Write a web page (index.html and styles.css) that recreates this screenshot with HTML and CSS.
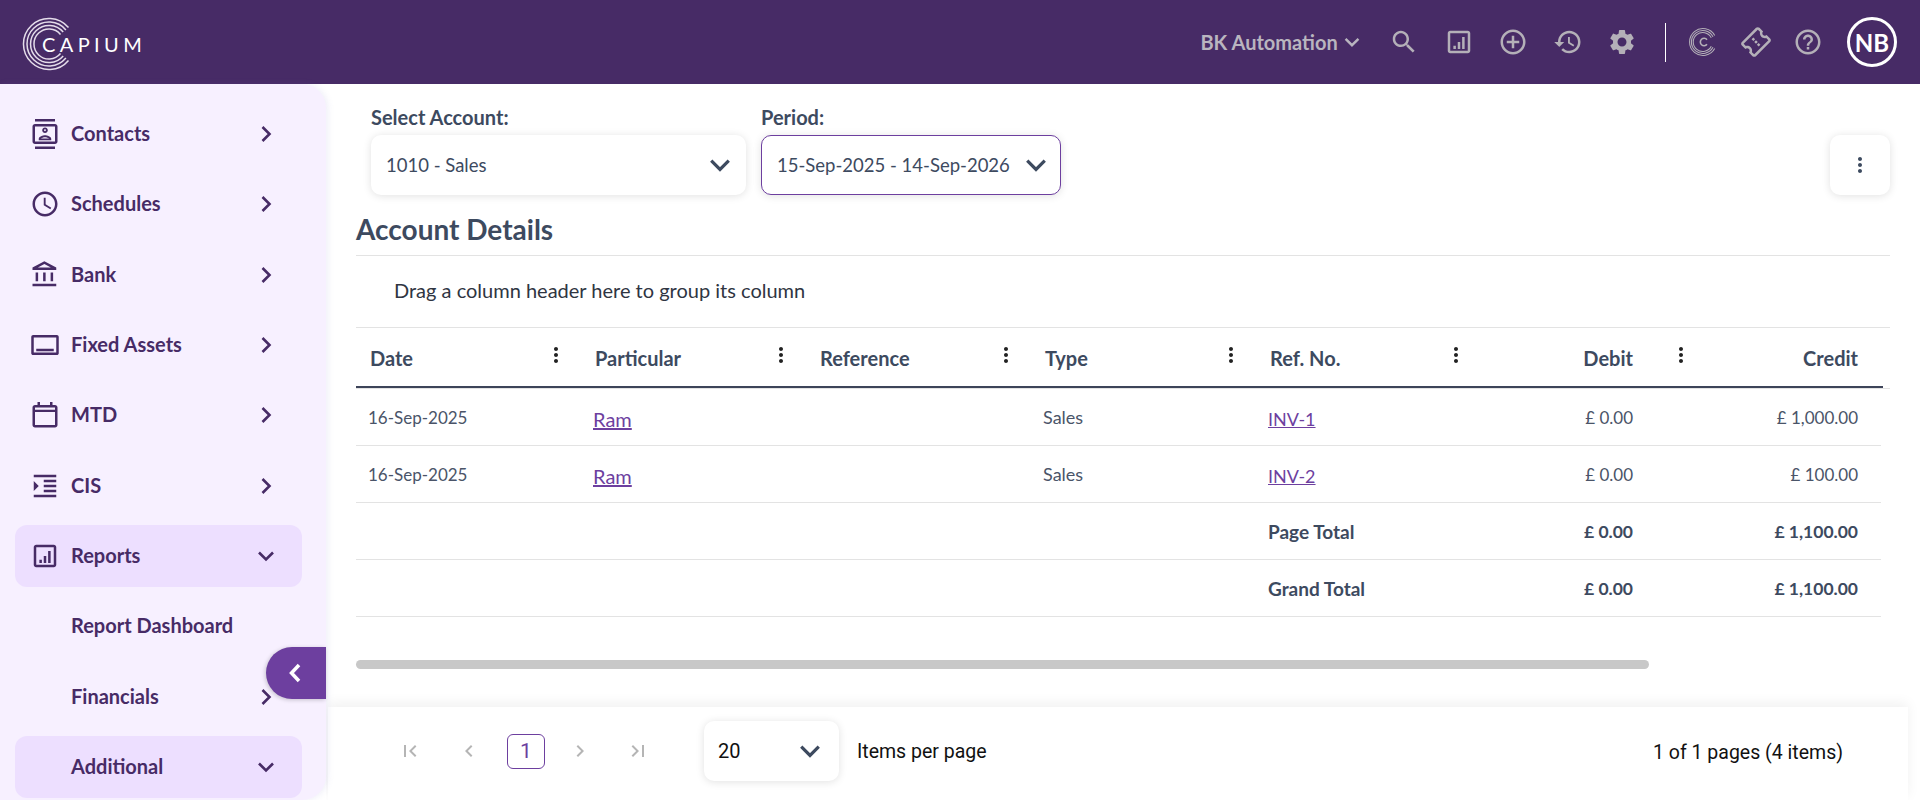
FILE: index.html
```html
<!DOCTYPE html>
<html lang="en">
<head>
  <meta charset="UTF-8">
  <title>Account Details</title>
  <link rel="stylesheet" href="styles.css">
</head>
<body>
  <svg class="defs" width="0" height="0">
    <symbol id="i-report" viewBox="0 0 24 24"><path d="M19 3H5c-1.100 0-2 .9-2 2v14c0 1.100.9 2 2 2h14c1.100 0 2-.9 2-2V5c0-1.100-.9-2-2-2zm0 16H5V5h14v14zM7.500 15h2v2.500h-2zM11 12h2v5.500h-2zM14.500 8h2v9.500h-2z"/></symbol>
    <symbol id="i-more" viewBox="0 0 24 24"><path d="M12 8c1.100 0 2-.9 2-2s-.9-2-2-2-2 .9-2 2 .9 2 2 2zm0 2c-1.100 0-2 .9-2 2s.9 2 2 2 2-.9 2-2-.9-2-2-2zm0 6c-1.100 0-2 .9-2 2s.9 2 2 2 2-.9 2-2-.9-2-2-2z"/></symbol>
    <symbol id="i-right" viewBox="0 0 24 24"><path d="M8.500 5l7 7-7 7" fill="none" stroke="currentColor" stroke-width="2.600"/></symbol>
    <symbol id="i-down" viewBox="0 0 24 24"><path d="M5 8.500l7 7 7-7" fill="none" stroke="currentColor" stroke-width="2.600"/></symbol>
  </svg>

  <header class="topbar">
    <div class="logo">
      <svg class="logo-rings" width="60" height="60" viewBox="19 14 60 60" fill="none" stroke="#e4dcea">
        <path stroke-width="1.500" d="M68.500 27.600A25.500 25.500 0 1 0 68.500 60.400"/>
        <path stroke-width="1.500" d="M65.900 29.900A22 22 0 1 0 65.900 58.100"/>
        <path stroke-width="1.500" d="M63.200 32.100A18.500 18.500 0 1 0 63.200 55.900"/>
        <path stroke-width="1.500" d="M60.500 34.400A15 15 0 1 0 60.500 53.600"/>
      </svg>
      <span class="logo-text">CAPIUM</span>
    </div>
    <div class="top-right">
      <span class="company">BK Automation</span>
      <svg class="company-arrow" width="22" height="22"><use href="#i-down"/></svg>
      <div class="top-icons">
        <svg class="top-icon" viewBox="0 0 24 24"><path d="M15.500 14h-.79l-.28-.27C15.410 12.590 16 11.110 16 9.500 16 5.910 13.090 3 9.500 3S3 5.910 3 9.500 5.910 16 9.500 16c1.610 0 3.090-.59 4.230-1.570l.27.280v.79l5 4.990L20.490 19l-4.990-5zm-6 0C7.010 14 5 11.990 5 9.500S7.010 5 9.500 5 14 7.010 14 9.500 11.990 14 9.500 14z"/></svg>
        <svg class="top-icon"><use href="#i-report"/></svg>
        <svg class="top-icon" viewBox="0 0 24 24"><path d="M13 7h-2v4H7v2h4v4h2v-4h4v-2h-4V7zm-1-5C6.480 2 2 6.480 2 12s4.480 10 10 10 10-4.480 10-10S17.520 2 12 2zm0 18c-4.410 0-8-3.590-8-8s3.590-8 8-8 8 3.590 8 8-3.590 8-8 8z"/></svg>
        <svg class="top-icon" viewBox="0 0 24 24"><path d="M13 3c-4.970 0-9 4.030-9 9H1l3.890 3.890.07.14L9 12H6c0-3.870 3.130-7 7-7s7 3.130 7 7-3.130 7-7 7c-1.930 0-3.680-.79-4.940-2.060l-1.420 1.420C8.270 19.990 10.510 21 13 21c4.970 0 9-4.030 9-9s-4.030-9-9-9zm-1 5v5l4.280 2.540.72-1.210-3.500-2.080V8H12z"/></svg>
        <svg class="top-icon" viewBox="0 0 24 24"><path d="M19.140 12.940c.04-.3.06-.61.06-.94 0-.32-.02-.64-.07-.94l2.030-1.580c.18-.14.23-.41.12-.61l-1.920-3.320c-.12-.22-.37-.29-.59-.22l-2.390.96c-.5-.38-1.030-.7-1.620-.94l-.36-2.540c-.04-.24-.24-.41-.48-.41h-3.840c-.24 0-.43.170-.47.41l-.36 2.540c-.59.24-1.130.57-1.620.94l-2.390-.96c-.22-.08-.47 0-.59.22L2.740 8.870c-.12.210-.08.47.12.61l2.030 1.580c-.05.3-.09.63-.09.94s.02.64.07.94l-2.030 1.580c-.18.14-.23.41-.12.61l1.920 3.320c.12.22.37.29.59.22l2.390-.96c.5.38 1.030.7 1.620.94l.36 2.540c.05.24.24.41.48.41h3.840c.24 0 .44-.17.47-.41l.36-2.540c.59-.24 1.130-.56 1.620-.94l2.390.96c.22.08.47 0 .59-.22l1.920-3.320c.12-.22.07-.47-.12-.61l-2.010-1.580zM12 15.600c-1.980 0-3.600-1.620-3.600-3.600s1.620-3.600 3.600-3.600 3.600 1.620 3.600 3.600-1.620 3.600-3.600 3.600z"/></svg>
      </div>
      <div class="top-divider"></div>
      <div class="top-icons tight">
        <svg class="top-icon ring-icon" viewBox="0 0 28 28">
          <path stroke-width="1" d="M24 8A12.500 12.500 0 1 0 24 20M22.400 9A10.700 10.700 0 1 0 22.400 19M20.800 10A8.900 8.900 0 1 0 20.800 18"/>
          <path stroke-width="1.500" d="M16.800 11.800A3.500 3.500 0 1 0 16.800 16.200"/>
        </svg>
        <svg class="top-icon ticket" viewBox="0 0 24 24"><path d="M22 10V6c0-1.110-.9-2-2-2H4c-1.100 0-1.990.89-1.990 2v4c1.100 0 1.990.9 1.990 2s-.89 2-2 2v4c0 1.100.9 2 2 2h16c1.100 0 2-.9 2-2v-4c-1.100 0-2-.9-2-2s.9-2 2-2zm-2-1.460c-1.190.69-2 1.990-2 3.460s.81 2.770 2 3.460V18H4v-2.540c1.190-.69 2-1.990 2-3.460 0-1.480-.8-2.770-1.990-3.460L4 6h16v2.540zM11 8h2v2h-2zM11 11h2v2h-2zM11 14h2v2h-2z"/></svg>
        <svg class="top-icon" viewBox="0 0 24 24"><path d="M11 18h2v-2h-2v2zm1-16C6.480 2 2 6.480 2 12s4.480 10 10 10 10-4.480 10-10S17.520 2 12 2zm0 18c-4.410 0-8-3.590-8-8s3.590-8 8-8 8 3.590 8 8-3.590 8-8 8zm0-14c-2.210 0-4 1.790-4 4h2c0-1.100.9-2 2-2s2 .9 2 2c0 2-3 1.750-3 5h2c0-2.250 3-2.500 3-5 0-2.210-1.790-4-4-4z"/></svg>
      </div>
      <div class="avatar">NB</div>
    </div>
  </header>

  <div class="layout">
    <nav class="sidebar">
      <a class="nav-item">
        <svg class="nav-icon" viewBox="0 0 24 24"><path d="M20 0H4v2h16V0zM4 24h16v-2H4v2zM20 4H4c-1.100 0-2 .9-2 2v12c0 1.100.9 2 2 2h16c1.100 0 2-.9 2-2V6c0-1.100-.9-2-2-2zm0 14H4V6h16v12zm-8-6.750c1.240 0 2.250-1.010 2.250-2.250S13.240 6.750 12 6.750 9.750 7.760 9.750 9s1.010 2.250 2.250 2.250zm0-3c.41 0 .75.34.75.75s-.34.75-.75.75-.75-.34-.75-.75.34-.75.75-.75zM17 15.990c0-2.090-3.310-2.990-5-2.990s-5 .9-5 2.990V17h10v-1.010zm-8.190-.49c.61-.52 2.030-1 3.190-1 1.170 0 2.590.48 3.200 1H8.810z"/></svg>
        <span class="nav-label">Contacts</span>
        <svg class="nav-arrow"><use href="#i-right"/></svg>
      </a>
      <a class="nav-item">
        <svg class="nav-icon" viewBox="0 0 24 24"><path d="M11.990 2C6.470 2 2 6.480 2 12s4.470 10 9.990 10C17.520 22 22 17.520 22 12S17.520 2 11.990 2zM12 20c-4.420 0-8-3.580-8-8s3.580-8 8-8 8 3.580 8 8-3.580 8-8 8zm.5-13H11v6l5.250 3.150.75-1.230-4.500-2.670z"/></svg>
        <span class="nav-label">Schedules</span>
        <svg class="nav-arrow"><use href="#i-right"/></svg>
      </a>
      <a class="nav-item">
        <svg class="nav-icon" viewBox="0 0 24 24"><path d="M6.500 10h-2v7h2v-7zm6 0h-2v7h2v-7zm8.500 9H2v2h19v-2zm-2.500-9h-2v7h2v-7zm-7-6.740L16.710 6H6.290l5.210-2.740m0-2.260L2 6v2h19V6l-9.500-5z"/></svg>
        <span class="nav-label">Bank</span>
        <svg class="nav-arrow"><use href="#i-right"/></svg>
      </a>
      <a class="nav-item">
        <svg class="nav-icon" viewBox="0 0 24 24"><path d="M2.500 4h19c.83 0 1.500.67 1.500 1.500v13c0 .83-.67 1.500-1.500 1.500h-19C1.670 20 1 19.330 1 18.500v-13C1 4.670 1.670 4 2.500 4zM3 6v12h18V6H3zm2 9h14v2H5z" fill-rule="evenodd"/></svg>
        <span class="nav-label">Fixed Assets</span>
        <svg class="nav-arrow"><use href="#i-right"/></svg>
      </a>
      <a class="nav-item">
        <svg class="nav-icon" viewBox="0 0 24 24"><path fill-rule="evenodd" d="M4 4h16c1.100 0 2 .9 2 2v14c0 1.100-.9 2-2 2H4c-1.100 0-2-.9-2-2V6c0-1.100.9-2 2-2zM4 6v1.800h16V6zM4 9.600V20h16V9.600zM6 1.500h2V4H6zM16 1.500h2V4h-2z"/></svg>
        <span class="nav-label">MTD</span>
        <svg class="nav-arrow"><use href="#i-right"/></svg>
      </a>
      <a class="nav-item">
        <svg class="nav-icon" viewBox="0 0 24 24"><path d="M3 21h18v-2H3v2zM3 8v8l4-4-4-4zm8 9h10v-2H11v2zM3 3v2h18V3H3zm8 6h10V7H11v2zm0 4h10v-2H11v2z"/></svg>
        <span class="nav-label">CIS</span>
        <svg class="nav-arrow"><use href="#i-right"/></svg>
      </a>
      <a class="nav-item open">
        <svg class="nav-icon"><use href="#i-report"/></svg>
        <span class="nav-label">Reports</span>
        <svg class="nav-arrow"><use href="#i-down"/></svg>
      </a>
      <a class="nav-item sub"><span class="nav-label">Report Dashboard</span></a>
      <a class="nav-item sub">
        <span class="nav-label">Financials</span>
        <svg class="nav-arrow"><use href="#i-right"/></svg>
      </a>
      <a class="nav-item sub open">
        <span class="nav-label">Additional</span>
        <svg class="nav-arrow"><use href="#i-down"/></svg>
      </a>
      <button class="collapse-btn">
        <svg width="30" height="30"><path d="M19 7l-7.500 8 7.500 8" fill="none" stroke="#fff" stroke-width="3.500"/></svg>
      </button>
    </nav>

    <main class="content">
      <div class="filters">
        <div class="field">
          <label class="field-label">Select Account:</label>
          <div class="select account">
            <span>1010 - Sales</span>
            <svg class="select-arrow"><use href="#i-down"/></svg>
          </div>
        </div>
        <div class="field">
          <label class="field-label">Period:</label>
          <div class="select period">
            <span>15-Sep-2025 - 14-Sep-2026</span>
            <svg class="select-arrow"><use href="#i-down"/></svg>
          </div>
        </div>
        <button class="more-btn"><svg width="24" height="24"><use href="#i-more"/></svg></button>
      </div>

      <h2 class="page-title">Account Details</h2>

      <div class="grid">
        <div class="group-panel">Drag a column header here to group its column</div>
        <div class="grid-head">
          <div class="row head-row">
            <div class="th"><span>Date</span><svg class="col-menu"><use href="#i-more"/></svg></div>
            <div class="th"><span>Particular</span><svg class="col-menu"><use href="#i-more"/></svg></div>
            <div class="th"><span>Reference</span><svg class="col-menu"><use href="#i-more"/></svg></div>
            <div class="th"><span>Type</span><svg class="col-menu"><use href="#i-more"/></svg></div>
            <div class="th"><span>Ref. No.</span><svg class="col-menu"><use href="#i-more"/></svg></div>
            <div class="th th-num"><span>Debit</span><svg class="col-menu"><use href="#i-more"/></svg></div>
            <div class="th th-last"><span>Credit</span></div>
          </div>
        </div>
        <div class="row body-row">
          <div class="td">16-Sep-2025</div>
          <div class="td"><a class="link name">Ram</a></div>
          <div class="td"></div>
          <div class="td word">Sales</div>
          <div class="td"><a class="link">INV-1</a></div>
          <div class="td num">£ 0.00</div>
          <div class="td num last">£ 1,000.00</div>
        </div>
        <div class="row body-row">
          <div class="td">16-Sep-2025</div>
          <div class="td"><a class="link name">Ram</a></div>
          <div class="td"></div>
          <div class="td word">Sales</div>
          <div class="td"><a class="link">INV-2</a></div>
          <div class="td num">£ 0.00</div>
          <div class="td num last">£ 100.00</div>
        </div>
        <div class="row body-row total">
          <div class="td"></div>
          <div class="td"></div>
          <div class="td"></div>
          <div class="td"></div>
          <div class="td word">Page Total</div>
          <div class="td num">£ 0.00</div>
          <div class="td num last">£ 1,100.00</div>
        </div>
        <div class="row body-row total">
          <div class="td"></div>
          <div class="td"></div>
          <div class="td"></div>
          <div class="td"></div>
          <div class="td word">Grand Total</div>
          <div class="td num">£ 0.00</div>
          <div class="td num last">£ 1,100.00</div>
        </div>
        <div class="scrollbar"></div>
      </div>

      <footer class="pager">
        <svg class="pg-icon" viewBox="0 0 24 24"><path d="M18.410 16.590L13.820 12l4.590-4.590L17 6l-6 6 6 6zM6 6h2v12H6z"/></svg>
        <svg class="pg-icon pg-prev" viewBox="0 0 24 24"><path d="M15.410 7.410L14 6l-6 6 6 6 1.410-1.410L10.830 12z"/></svg>
        <span class="pg-current">1</span>
        <svg class="pg-icon pg-next" viewBox="0 0 24 24"><path d="M10 6L8.590 7.410 13.170 12l-4.580 4.590L10 18l6-6z"/></svg>
        <svg class="pg-icon" viewBox="0 0 24 24"><path d="M5.590 7.410L10.180 12l-4.590 4.590L7 18l6-6-6-6zM16 6h2v12h-2z"/></svg>
        <div class="select page-size">
          <span>20</span>
          <svg class="select-arrow"><use href="#i-down"/></svg>
        </div>
        <span class="pg-text">Items per page</span>
        <span class="pg-info">1 of 1 pages (4 items)</span>
      </footer>
    </main>
  </div>
</body>
</html>
```

FILE: styles.css
```css
* {
  box-sizing: border-box;
}
html, body {
  margin: 0;
  height: 800px;
  overflow: hidden;
}
body {
  font-family: Lato, sans-serif;
  background-color: #fff;
  color: #3d4a5f;
}
.defs {
  position: absolute;
}

/* top bar */
.topbar {
  height: 84px;
  background-color: #472b66;
  display: flex;
  align-items: center;
  justify-content: space-between;
  padding-right: 23px;
}
.logo {
  position: relative;
  width: 160px;
  height: 84px;
}
.logo-rings {
  position: absolute;
  left: 19px;
  top: 14px;
}
.logo-text {
  position: absolute;
  left: 42px;
  top: 31px;
  color: #fff;
  font-size: 20px;
  line-height: 26px;
  letter-spacing: 4.4px;
}
.top-right {
  display: flex;
  align-items: center;
}
.company {
  color: #b9b5bf;
  font-size: 20px;
  font-weight: 700;
  width: 141px;
}
.company-arrow {
  color: #b9b5bf;
  margin-right: 26px;
}
.top-icons {
  display: flex;
  gap: 24.400px;
}
.top-icons.tight {
  gap: 22px;
}
.top-icon {
  width: 30px;
  height: 30px;
  fill: #b4b0b8;
}
.ring-icon {
  fill: none;
  stroke: #b4b0b8;
}
.ticket {
  transform: rotate(-45deg);
}
.top-divider {
  width: 1px;
  height: 39px;
  background-color: #fff;
  margin: 0 23px 0 28px;
}
.avatar {
  width: 50px;
  height: 50px;
  margin-left: 24px;
  border: 3px solid #fff;
  border-radius: 50%;
  color: #fff;
  font-size: 24px;
  font-weight: 700;
  display: flex;
  align-items: center;
  justify-content: center;
}

/* sidebar */
.layout {
  display: flex;
  height: 716px;
}
.sidebar {
  position: relative;
  width: 326px;
  flex-shrink: 0;
  background-color: #f7f0ff;
  border-radius: 0 24px 24px 0;
  box-shadow: 2px 0 6px rgba(120, 120, 200, .12);
  padding: 19px 24px 0 15px;
}
.nav-item {
  display: flex;
  align-items: center;
  height: 62.300px;
  margin-bottom: 8px;
  padding: 0 24px 0 15px;
  border-radius: 12px;
  color: #472b66;
}
.nav-item.open {
  background-color: #eddfff;
}
.nav-icon {
  width: 30px;
  height: 30px;
  fill: #472b66;
  margin-right: 11px;
}
.nav-label {
  flex: 1;
  font-size: 20px;
  font-weight: 700;
  margin-top: -2px;
}
.sub .nav-label {
  margin-left: 41px;
}
.nav-arrow {
  width: 24px;
  height: 24px;
}
.collapse-btn {
  position: absolute;
  right: 0;
  top: 563px;
  width: 60px;
  height: 52px;
  border: 0;
  padding: 0 0 0 14px;
  background-color: #6d3f9f;
  border-radius: 26px 0 0 26px;
  box-shadow: -1px 1px 4px rgba(0, 0, 0, .2);
  display: flex;
  align-items: center;
}

/* main area */
.content {
  flex: 1;
  height: 716px;
  display: flex;
  flex-direction: column;
  padding-left: 30px;
  overflow: hidden;
}
.filters {
  display: flex;
  align-items: flex-end;
  gap: 15px;
  height: 111px;
  padding: 0 30px 0 15px;
}
.field-label {
  display: block;
  font-size: 20px;
  font-weight: 700;
  line-height: 24px;
  margin-bottom: 6px;
}
.select {
  display: flex;
  align-items: center;
  justify-content: space-between;
  height: 60px;
  background-color: #fff;
  border-radius: 10px;
  box-shadow: 0 1px 8px rgba(0, 0, 0, .12);
  font-size: 18.500px;
}
.select-arrow {
  width: 30px;
  height: 30px;
  color: #3d4a5f;
}
.account {
  width: 375px;
  padding: 0 11px 0 15px;
}
.period {
  width: 300px;
  padding: 0 9px 0 15px;
  border: 1px solid #6d3f9f;
}
.more-btn {
  margin-left: auto;
  width: 60px;
  height: 60px;
  border: 0;
  border-radius: 10px;
  background-color: #fff;
  box-shadow: 0 1px 8px rgba(0, 0, 0, .12);
  fill: #3d4a5f;
  display: flex;
  align-items: center;
  justify-content: center;
}
.page-title {
  margin: 0 30px 0 0;
  padding-top: 15px;
  height: 61px;
  font-size: 28px;
  line-height: 38px;
  font-weight: 700;
  border-bottom: 1px solid #e3e3e3;
}
.grid {
  width: 1534px;
}
.group-panel {
  height: 72px;
  padding-left: 38px;
  font-size: 20px;
  color: #2f3542;
  line-height: 68px;
  border-bottom: 1px solid #e3e3e3;
}
.grid-head {
  border-bottom: 1px solid #e3e3e3;
  height: 61px;
}
.row {
  display: grid;
  grid-template-columns: repeat(6, 225px) 175px;
  width: 1525px;
}
.head-row {
  height: 60px;
  width: 1527px;
  border-bottom: 2px solid #3d4459;
}
.th {
  display: flex;
  align-items: center;
  justify-content: space-between;
  padding: 2px 13px 0 14px;
  font-size: 20px;
  font-weight: 700;
}
.th-num {
  justify-content: flex-end;
  gap: 36px;
}
.th-last {
  justify-content: flex-end;
  padding-right: 23px;
}
.col-menu {
  width: 24px;
  height: 24px;
  fill: #222;
  margin-top: -6px;
}
.body-row {
  height: 57px;
  border-bottom: 1px solid #e3e3e3;
}
.td {
  display: flex;
  align-items: center;
  padding-left: 12px;
  font-size: 17px;
  color: #4a5468;
}
.td.word {
  font-size: 18px;
}
.td.num {
  justify-content: flex-end;
  padding-right: 73px;
}
.td.last {
  padding-right: 23px;
}
.link {
  font-size: 18px;
  margin-top: 3px;
  color: #6d3f9f;
  text-decoration: underline;
}
.link.name {
  font-size: 20px;
}
.total .td {
  font-weight: 700;
  font-size: 17.500px;
  color: #3d4a5f;
}
.total .td.word {
  font-size: 19px;
}
.scrollbar {
  width: 1293px;
  height: 9px;
  margin-top: 43px;
  border-radius: 5px;
  background-color: #c8c8c8;
}

/* pager */
.pager {
  margin: auto 0 0 -28px;
  width: 1580px;
  height: 93px;
  display: flex;
  align-items: center;
  padding: 0 65px 5px 70px;
  background-color: #fff;
  box-shadow: 0 -4px 12px rgba(0, 0, 0, .06);
  font-family: Roboto, sans-serif;
  font-size: 19.500px;
  color: #111;
}
.pg-icon {
  width: 24px;
  height: 24px;
  fill: #b5b5b5;
}
.pg-prev {
  margin: 0 26px 0 35px;
}
.pg-next {
  margin: 0 34px 0 23px;
}
.pg-current {
  width: 38px;
  height: 35px;
  border: 1px solid #6d3f9f;
  border-radius: 6px;
  color: #6d3f9f;
  display: flex;
  align-items: center;
  justify-content: center;
  font-size: 21px;
}
.page-size {
  width: 135px;
  margin-left: 54px;
  padding: 0 14px;
  font-size: 20px;
}
.pg-text {
  margin-left: 18px;
}
.pg-info {
  margin-left: auto;
  margin-top: 3px;
}
```
